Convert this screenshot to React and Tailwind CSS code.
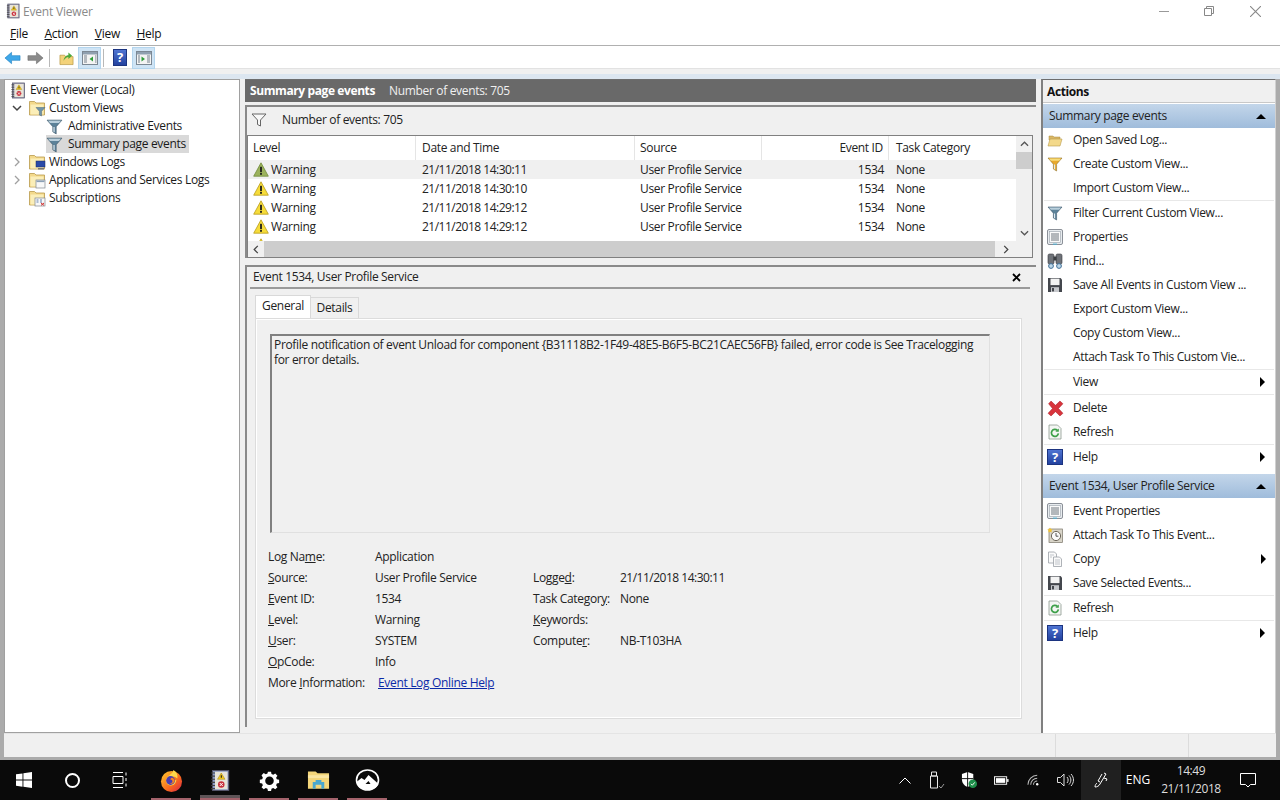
import React from "react";

const Help = ({ className = "w-4 h-4" }) => (
  <span className={`${className} shrink-0 flex items-center justify-center bg-gradient-to-b from-[#4f74d2] to-[#24429f] border border-[#1c3480] text-white text-[13px] font-bold leading-none`}>
    ?
  </span>
);

const AppIcon = ({ className = "w-4 h-4", cover = "#8f8fa8" }) => (
  <svg viewBox="0 0 16 18" className={className}>
    <rect x="2" y="1" width="13" height="16" fill={cover} stroke="#55556a" strokeWidth=".7" />
    <rect x="4" y="2" width="10" height="14" fill="#e8e4d8" />
    <path d="M1 3h3M1 5.5h3M1 8h3M1 10.5h3M1 13h3M1 15.5h3" stroke="#444" strokeWidth=".9" />
    <path d="M9 3l3 5H6z" fill="#f2c81e" stroke="#9c8010" strokeWidth=".4" />
    <rect x="8.6" y="4.800" width=".9" height="2" fill="#222" />
    <circle cx="9" cy="12.200" r="2.600" fill="#c8303c" />
    <path d="M7.800 11l2.400 2.400M10.200 11l-2.400 2.400" stroke="#fff" strokeWidth=".8" />
  </svg>
);

const Folder = ({ children }) => (
  <svg viewBox="0 0 18 18" className="w-[18px] h-[18px] shrink-0">
    <path d="M1.500 2.500h5l1.500 1.500h8.500v12h-15z" fill="#f3d98b" stroke="#b99a4c" strokeWidth=".8" />
    <rect x="2.500" y="5.500" width="13" height="10" fill="#fbeeb8" />
    {children}
  </svg>
);

const Funnel = ({ className = "w-4 h-4", top = "#b9cfdc", bottom = "#5c8299", dark = "#41596b" }) => (
  <svg viewBox="0 0 16 16" className={className}>
    <path d="M1 2h14L9.600 8.200V15L6.400 13V8.200z" fill={bottom} stroke={dark} strokeWidth=".6" />
    <path d="M2 2.600h12l-1.800 2.200H3.800z" fill={top} />
    <path d="M7 8.500h1.100v5L7 12.900z" fill="#dfeaf0" />
  </svg>
);

const Warning = ({ green }) => (
  <svg viewBox="0 0 16 15" className="w-4 h-[15px] shrink-0">
    <path d="M8 .8l7.300 13.400H.7z" fill={green ? "#9cb25c" : "#f6dc3a"} stroke={green ? "#6f8a38" : "#b79a1b"} strokeWidth=".8" strokeLinejoin="round" />
    <rect x="7.100" y="4.800" width="1.800" height="5.400" fill="#1c1c1c" />
    <rect x="7.100" y="11" width="1.800" height="1.800" fill="#1c1c1c" />
  </svg>
);

const Floppy = () => (
  <svg viewBox="0 0 16 16" className="w-4 h-4">
    <path d="M1 1h12.500L15 2.500V15H1z" fill="#44474d" />
    <rect x="3.500" y="1.600" width="9" height="6.500" fill="#f3f3f3" />
    <rect x="4" y="10.200" width="8" height="4.800" fill="#c6c8cc" />
    <rect x="5" y="11" width="2" height="3.400" fill="#44474d" />
  </svg>
);

const Refresh = () => (
  <svg viewBox="0 0 16 16" className="w-4 h-4">
    <path d="M2 1h8.500L14 4.500V15H2z" fill="#f4f6f4" stroke="#8e9a90" strokeWidth=".8" />
    <path d="M11.400 9.400a3.500 3.500 0 1 1-1-3" fill="none" stroke="#3ea04a" strokeWidth="1.700" />
    <path d="M11.800 4.400v3.400H8.400z" fill="#3ea04a" />
  </svg>
);

const Properties = () => (
  <svg viewBox="0 0 16 16" className="w-4 h-4">
    <rect x=".5" y=".5" width="15" height="15" rx="1.500" fill="#e8ecef" stroke="#7f858c" strokeWidth=".9" />
    <rect x="2.500" y="2.500" width="11" height="11" fill="#fafafa" stroke="#98a0a8" strokeWidth=".6" />
    <path d="M4 5h8M4 7h8M4 9h8M4 11h8" stroke="#5d666f" strokeWidth=".9" />
    <rect x="6" y="14.600" width="4" height="1" fill="#4fb3d8" />
  </svg>
);

const Binoculars = () => (
  <svg viewBox="0 0 16 16" className="w-4 h-4">
    <rect x="1" y="1" width="6" height="10" rx="1.500" fill="#6e7278" stroke="#35383c" strokeWidth=".6" />
    <rect x="9" y="1" width="6" height="10" rx="1.500" fill="#6e7278" stroke="#35383c" strokeWidth=".6" />
    <rect x="6.500" y="3.500" width="3" height="4" fill="#3b3e42" />
    <circle cx="4" cy="13" r="2.400" fill="#bcd6e8" stroke="#3f6f96" />
    <circle cx="12" cy="13" r="2.400" fill="#bcd6e8" stroke="#3f6f96" />
  </svg>
);

const Copy = () => (
  <svg viewBox="0 0 16 16" className="w-4 h-4">
    <path d="M1.500 1h6l2 2v9h-8z" fill="#fafafa" stroke="#9aa0a6" strokeWidth=".8" />
    <path d="M6.500 6h6l2 2v7.500h-8z" fill="#fafafa" stroke="#9aa0a6" strokeWidth=".8" />
    <path d="M3 4h4M3 6h2M8 9h5M8 11h5M8 13h5" stroke="#a6adb4" strokeWidth=".7" />
  </svg>
);

const TaskClock = () => (
  <svg viewBox="0 0 16 16" className="w-4 h-4">
    <rect x="2" y="2" width="13.500" height="13.500" fill="#d8d4c8" stroke="#7a7468" strokeWidth=".7" />
    <circle cx="9" cy="9" r="4.600" fill="#fafafa" stroke="#6d675c" />
    <path d="M9 6v3.200h2.400" fill="none" stroke="#444" strokeWidth=".9" />
    <path d="M3 .5l.9 1.700 1.800.4-1.300 1.200.3 1.800L3 4.700l-1.700.9.3-1.800L.3 2.600l1.800-.4z" fill="#f4c430" />
  </svg>
);

const OpenFolder = () => (
  <svg viewBox="0 0 16 16" className="w-4 h-4">
    <path d="M2 4h4l1 1h6v3H2z" fill="#d9b765" stroke="#a98a3e" strokeWidth=".5" />
    <path d="M1 14l2-7h12l-2 7z" fill="#f3d98b" stroke="#b99a4c" strokeWidth=".6" />
  </svg>
);

const PaneIcon = ({ children }) => (
  <div className="w-[23px] h-[22px] flex items-center justify-center bg-[#cfe4f5] border border-[#b3d5ee]">
    <svg viewBox="0 0 16 14" className="w-4 h-[14px]">
      <rect x=".5" y=".5" width="15" height="13" fill="#f4f4f4" stroke="#7c8894" />
      <rect x="1" y="1" width="14" height="2.500" fill="#8fa0b0" />
      {children}
    </svg>
  </div>
);

const actionsTop = [
  [[<OpenFolder />, "Open Saved Log..."], [<Funnel top="#f7dd7a" bottom="#e9a92c" dark="#8f7330" />, "Create Custom View..."], [null, "Import Custom View..."]],
  [[<Funnel />, "Filter Current Custom View..."], [<Properties />, "Properties"], [<Binoculars />, "Find..."], [<Floppy />, "Save All Events in Custom View ..."], [null, "Export Custom View..."], [null, "Copy Custom View..."], [null, "Attach Task To This Custom Vie..."]],
  [[null, "View", true]],
  [[<svg viewBox="0 0 16 16" className="w-[17px] h-[17px] shrink-0"><path d="M1.500 3.500L3.800 1 8 5 12.200 1 15 3.500 10.800 8 15 12.500 12.200 15 8 11 3.800 15 1 12.500 5.200 8z" fill="#d8343c" stroke="#a8222a" strokeWidth=".5" /></svg>, "Delete"], [<Refresh />, "Refresh"]],
  [[<Help />, "Help", true]],
];

const actionsEvent = [
  [[<Properties />, "Event Properties"], [<TaskClock />, "Attach Task To This Event..."], [<Copy />, "Copy", true], [<Floppy />, "Save Selected Events..."]],
  [[<Refresh />, "Refresh"]],
  [[<Help />, "Help", true]],
];

const rows = [
  ["21/11/2018 14:30:11", true],
  ["21/11/2018 14:30:10"],
  ["21/11/2018 14:29:12"],
  ["21/11/2018 14:29:12"],
];

const ActionSection = ({ title, groups, padded }) => (
  <div>
    <div className="h-6 pl-[6px] pr-2 flex items-center justify-between bg-gradient-to-b from-[#c3d6ea] to-[#9fbcdb]">
      <span>{title}</span>
      <span className="w-0 h-0 mr-[1px] border-x-[5px] border-x-transparent border-b-[5px] border-b-black" />
    </div>
    {groups.map((group, i) => (
      <div key={i} className={`${i > 0 ? "border-t border-[#e8e8e8] mx-[1px]" : ""} ${i === padded ? "pt-px" : ""}`}>
        {group.map(([icon, label, arrow]) => (
          <div key={label} className={`h-6 flex items-center pr-[9px] ${i > 0 ? "pl-[3px]" : "pl-[4px]"}`}>
            <span className="w-4 h-4 mr-[10px] flex items-center justify-center shrink-0">{icon}</span>
            <span className="flex-1 whitespace-nowrap">{label}</span>
            {arrow && <span className="w-0 h-0 border-y-[5px] border-y-transparent border-l-[5px] border-l-black" />}
          </div>
        ))}
      </div>
    ))}
  </div>
);

const TreeRow = ({ children, pad, chevron, selected, icon, gap = "ml-[5px]" }) => (
  <div className={`h-[18px] flex items-center ${pad}`}>
    {chevron === "open" && (
      <svg viewBox="0 0 10 10" className="w-[10px] h-[10px] mr-[6px]"><path d="M1 3l4 4 4-4" fill="none" stroke="#444" strokeWidth="1.500" /></svg>
    )}
    {chevron === "closed" && (
      <svg viewBox="0 0 10 10" className="w-[10px] h-[10px] mr-[6px]"><path d="M3 1l4 4-4 4" fill="none" stroke="#a0a0a0" strokeWidth="1.300" /></svg>
    )}
    <div className={`flex items-center h-[18px] ${selected ? "bg-[#d9d9d9] pr-[3px]" : ""}`}>
      {icon}
      <span className={`${gap} whitespace-nowrap`}>{children}</span>
    </div>
  </div>
);

const Field = ({ label }) => <span className="whitespace-nowrap">{label}</span>;

const Tray = ({ w, children, className = "" }) => (
  <div className={`h-10 flex items-center justify-center shrink-0 ${w} ${className}`}>{children}</div>
);

const Pin = ({ children, active }) => (
  <div className="relative w-10 h-10 flex items-center justify-center">
    {children}
    {active && <div className="absolute left-0 right-0 bottom-[2px] h-[3px] bg-[#5f5558]" />}
    <div className="absolute left-0 right-0 bottom-0 h-[2px] bg-[#a4636c]" />
  </div>
);

export default function App() {
  return (
    <div className="w-[1280px] h-[800px] overflow-hidden flex flex-col bg-white text-[12px] text-[#222] font-['Open_Sans',sans-serif] tracking-[-0.33px]">
      {/* title bar */}
      <div className="h-[22px] flex items-center pl-[6px] shrink-0">
        <AppIcon className="w-[14px] h-4" />
        <span className="ml-[3px] pt-px text-[#8a8a8a] tracking-[-0.2px]">Event Viewer</span>
        <div className="ml-auto flex items-center mr-[2px]">
          <div className="w-[44px] flex justify-center"><div className="w-[10px] h-px bg-[#999]" /></div>
          <div className="w-[46px] flex justify-center">
            <svg viewBox="0 0 10 10" className="w-[10px] h-[10px]"><path d="M.5 2.500h7v7h-7zM2.500 2.500v-2h7v7h-2" fill="none" stroke="#888" /></svg>
          </div>
          <div className="w-[46px] flex justify-center">
            <svg viewBox="0 0 10 10" className="w-[11px] h-[11px]"><path d="M0 0l10 10M10 0L0 10" stroke="#888" /></svg>
          </div>
        </div>
      </div>

      {/* menu */}
      <div className="h-6 flex items-center pl-[10px] gap-[16.5px] border-b border-[#b0b0b0] shrink-0 text-[#111] tracking-[-0.25px]">
        <span><u>F</u>ile</span>
        <span><u>A</u>ction</span>
        <span><u>V</u>iew</span>
        <span><u>H</u>elp</span>
      </div>

      {/* toolbar */}
      <div className="h-[23px] flex items-center pl-[4px] pt-[1px] border-b border-[#e2e2e2] shrink-0">
        <svg viewBox="0 0 18 14" className="w-[17px] h-[14px]"><path d="M8 1L1 7l7 6V9.500h9v-5H8z" fill="#3fa7e8" stroke="#1a7dc0" strokeWidth=".6" /></svg>
        <svg viewBox="0 0 18 14" className="w-[17px] h-[14px] ml-[6px]"><path d="M10 1l7 6-7 6V9.500H1v-5h9z" fill="#8a8a8a" stroke="#6a6a6a" strokeWidth=".6" /></svg>
        <div className="w-px h-[18px] bg-[#b8b8b8] ml-[5px]" />
        <div className="w-[22px] h-[22px] ml-[5px] mr-[1px] flex items-center justify-center">
          <svg viewBox="0 0 16 16" className="w-[15px] h-4"><path d="M1 5h5l1 1.500h8V15H1z" fill="#f3d27a" stroke="#b4923c" strokeWidth=".7" /><path d="M5 11c0-4 3-6 5-6V2l4 3.500L10 9V6.800C8 7 6 8.500 5 11z" fill="#4aa83c" /></svg>
        </div>
        <PaneIcon>
          <path d="M2 5h3M2 7h3M2 9h3M2 11h3M13 5h1.500M13 7h1.500M13 9h1.500M13 11h1.500" stroke="#74808c" />
          <path d="M11 5.500v5L7.500 8z" fill="#2f9e3a" />
        </PaneIcon>
        <div className="w-px h-[18px] bg-[#b8b8b8] ml-[2px]" />
        <div className="ml-[9px]"><Help className="w-[14px] h-[17px]" /></div>
        <div className="ml-[5px]">
          <PaneIcon>
            <path d="M2 5h2M2 7h2M2 9h2M2 11h2M11 5h3M11 7h3M11 9h3M11 11h3" stroke="#74808c" />
            <path d="M5.500 5.500v5L9 8z" fill="#2f9e3a" />
          </PaneIcon>
        </div>
      </div>

      {/* band above the panes */}
      <div className="h-[10px] shrink-0 bg-gradient-to-b from-[#f0f0f0] from-50% to-[#dce6f0] to-50%" />

      {/* panes and status bar */}
      <div className="flex-1 min-h-0 bg-[#ababab] px-1 pb-[3px]">
        <div className="h-full bg-[#f0f0f0] flex flex-col">
          <div className="h-[654px] flex gap-[5px] shrink-0">
            {/* tree */}
            <div className="w-[236px] bg-white border border-[#a0a0a0] pt-[1px] text-[#1a1a1a]">
              <TreeRow pad="pl-[5px]" gap="ml-[4px]" icon={<AppIcon className="w-[16px] h-[17px]" />}>Event Viewer (Local)</TreeRow>
              <TreeRow pad="pl-[7px]" gap="ml-[3px]" chevron="open" icon={<Folder><path d="M8 8.500h9l-3.400 3.800V17l-2.200-1v-3.700z" fill="#6f93a8" stroke="#4a6678" strokeWidth=".5" /></Folder>}>Custom Views</TreeRow>
              <TreeRow pad="pl-[41px]" icon={<Funnel className="w-[17px] h-[17px]" />}>Administrative Events</TreeRow>
              <TreeRow pad="pl-[41px]" selected icon={<Funnel className="w-[17px] h-[17px]" />}>Summary page events</TreeRow>
              <TreeRow pad="pl-[7px]" gap="ml-[3px]" chevron="closed" icon={<Folder><rect x="8" y="8" width="9" height="6" fill="#2a4aa8" stroke="#1c2c60" strokeWidth=".5" /><rect x="10" y="15" width="6" height="1.500" fill="#777" /></Folder>}>Windows Logs</TreeRow>
              <TreeRow pad="pl-[7px]" gap="ml-[3px]" chevron="closed" icon={<Folder><rect x="8" y="9" width="9" height="8" fill="#f8f8f8" stroke="#808890" strokeWidth=".7" /><rect x="8.500" y="9.500" width="8" height="1.600" fill="#8ba0b6" /></Folder>}>Applications and Services Logs</TreeRow>
              <TreeRow pad="pl-[7px]" gap="ml-[3px]" icon={<span className="ml-[16px]"><Folder><rect x="7" y="9" width="10" height="8" fill="#f8f8f8" stroke="#808890" strokeWidth=".7" /><path d="M8.500 11h2M12 11h2M8.500 13h2M12 13h2" stroke="#6080b0" /><path d="M13 14l3 2.400M16 14l-3 2.400" stroke="#d03030" /></Folder></span>}>Subscriptions</TreeRow>
            </div>

            {/* center */}
            <div className="w-[791px] flex flex-col border-t border-[#6d6d6d]">
              <div className="h-[22px] shrink-0 bg-[#696969] text-white flex items-center pl-[5px]">
                <span className="font-bold tracking-[-0.4px]">Summary page events</span>
                <span className="ml-[14px] text-[#f0f0f0]">Number of events: 705</span>
              </div>

              <div className="mt-[3px] h-[153px] shrink-0 border-t-2 border-l-2 border-[#8a8a8a] flex flex-col">
                <div className="h-[28px] flex items-center pl-[4px] pb-[2px] shrink-0">
                  <svg viewBox="0 0 16 14" className="w-4 h-[14px]"><path d="M1 1h14L9.500 7v6L6.500 11.500V7z" fill="#f8f8f8" stroke="#666" /></svg>
                  <span className="ml-[15px]">Number of events: 705</span>
                </div>
                <div className="w-[786px] flex-1 min-h-0 border border-[#808080] bg-white flex flex-col">
                  <div className="flex-1 flex min-h-0">
                    <div className="flex-1 min-w-0 overflow-hidden">
                      <div className="h-6 flex items-center">
                        <div className="w-[168px] h-full flex items-center pl-[5px] border-r border-[#e5e5e5]">Level</div>
                        <div className="w-[219px] h-full flex items-center pl-[6px] border-r border-[#e5e5e5]">Date and Time</div>
                        <div className="w-[127px] h-full flex items-center pl-[5px] border-r border-[#e5e5e5]">Source</div>
                        <div className="w-[127px] h-full flex items-center justify-end pr-[5px] border-r border-[#e5e5e5]">Event ID</div>
                        <div className="pl-[7px]">Task Category</div>
                      </div>
                      {rows.map(([time, active], i) => (
                        <div key={i} className={`h-[19px] flex items-center ${active ? "bg-[#f0f0f0]" : ""}`}>
                          <div className="w-[168px] flex items-center pl-[5px]"><Warning green={active} /><span className="ml-[2px]">Warning</span></div>
                          <div className="w-[219px] pl-[6px] tracking-[-0.5px]">{time}</div>
                          <div className="w-[127px] pl-[5px]">User Profile Service</div>
                          <div className="w-[127px] text-right pr-[5px]">1534</div>
                          <div className="pl-[7px]">None</div>
                        </div>
                      ))}
                      {/* next row only just peeks out above the scrollbar */}
                      <div className="pl-[5px] pt-[2px]"><Warning /></div>
                    </div>
                    <div className="w-[16px] shrink-0 bg-[#f0f0f0] flex flex-col items-center">
                      <svg viewBox="0 0 10 6" className="w-[9px] h-[6px] mt-[5px]"><path d="M1 5l4-4 4 4" fill="none" stroke="#555" strokeWidth="1.400" /></svg>
                      <div className="w-full h-[17px] mt-[5px] bg-[#cdcdcd]" />
                      <svg viewBox="0 0 10 6" className="w-[9px] h-[6px] mt-auto mb-[5px]"><path d="M1 1l4 4 4-4" fill="none" stroke="#555" strokeWidth="1.400" /></svg>
                    </div>
                  </div>
                  <div className="h-4 shrink-0 bg-[#f0f0f0] flex items-center">
                    <svg viewBox="0 0 6 10" className="w-[6px] h-[9px] mx-[5px]"><path d="M5 1L1 5l4 4" fill="none" stroke="#444" strokeWidth="1.400" /></svg>
                    <div className="w-[731px] h-full bg-[#cdcdcd]" />
                    <svg viewBox="0 0 6 10" className="w-[6px] h-[9px] ml-[8px]"><path d="M1 1l4 4-4 4" fill="none" stroke="#444" strokeWidth="1.400" /></svg>
                  </div>
                </div>
              </div>

              <div className="mt-[7px] flex-1 min-h-0 border-t-2 border-l-2 border-[#8a8a8a] flex flex-col mb-[6px]">
                <div className="h-[20px] ml-[3px] mr-[6px] shrink-0 border-b-2 border-[#9a9a9a] flex items-center justify-between pl-[3px] pr-[9px] box-content">
                  <span>Event 1534, User Profile Service</span>
                  <svg viewBox="0 0 9 9" className="w-[9px] h-[9px]"><path d="M1 1l7 7M8 1L1 8" stroke="#000" strokeWidth="1.800" /></svg>
                </div>
                <div className="flex items-end h-[29px] shrink-0 pl-[8px]">
                  <div className="w-[56px] h-[23px] pb-[2px] bg-white border border-b-0 border-[#d9d9d9] flex items-center justify-center">General</div>
                  <div className="w-[48px] h-[21px] bg-[#f0f0f0] border border-l-0 border-b-0 border-[#d9d9d9] flex items-center justify-center">Details</div>
                </div>
                <div className="ml-[8px] w-[767px] flex-1 min-h-0 mb-[8px] border border-[#dcdcdc] outline outline-1 outline-white -outline-offset-2 bg-[#f0f0f0] pt-[15px] pl-[14px]">
                  <div className="w-[720px] h-[199px] border-t-2 border-l-2 border-t-[#808080] border-l-[#808080] border-r border-b border-r-[#e0e0e0] border-b-[#e0e0e0] pl-[2px] pt-[1px] pr-[4px] leading-[15px]">
                    Profile notification of event Unload for component {"{B31118B2-1F49-48E5-B6F5-BC21CAEC56FB}"} failed, error code is See Tracelogging for error details.
                  </div>
                  <div className="mt-[13px] -ml-[2px] grid grid-cols-[107px_158px_87px_1fr] auto-rows-[21px] items-center">
                    <Field label={<>Log Na<u>m</u>e:</>} /><span>Application</span><span /><span />
                    <Field label={<><u>S</u>ource:</>} /><span>User Profile Service</span><Field label={<>Logge<u>d</u>:</>} /><span className="tracking-[-0.5px]">21/11/2018 14:30:11</span>
                    <Field label={<><u>E</u>vent ID:</>} /><span>1534</span><Field label={<>Task Categor<u>y</u>:</>} /><span>None</span>
                    <Field label={<><u>L</u>evel:</>} /><span>Warning</span><Field label={<><u>K</u>eywords:</>} /><span />
                    <Field label={<><u>U</u>ser:</>} /><span>SYSTEM</span><Field label={<>Compute<u>r</u>:</>} /><span>NB-T103HA</span>
                    <Field label={<><u>O</u>pCode:</>} /><span>Info</span><span /><span />
                    <Field label={<>More <u>I</u>nformation:</>} /><span className="pl-[3px] text-[#0b2aa8] underline">Event Log Online Help</span><span /><span />
                  </div>
                </div>
              </div>
            </div>

            {/* actions */}
            <div className="w-[235px] bg-white border-t border-[#6d6d6d] border-l-2 border-l-[#808080] border-r border-r-[#d0d0d0]">
              <div className="h-[23px] pt-px bg-[#f0f0f0] border-b border-[#c8c8c8] flex items-center pl-[4px] font-bold tracking-[-0.4px] text-[#111]">Actions</div>
              <div className="mt-[1px]">
                <ActionSection title="Summary page events" groups={actionsTop} padded={3} />
              </div>
              <div className="mt-[5px]">
                <ActionSection title="Event 1534, User Profile Service" groups={actionsEvent} padded={0} />
              </div>
            </div>
          </div>

          {/* status bar */}
          <div className="flex-1 flex justify-end border-t border-[#e4e4e4]">
            <div className="w-[133px] border-l border-[#dcdcdc]" />
            <div className="w-[88px] border-l border-[#dcdcdc]" />
          </div>
        </div>
      </div>

      {/* taskbar */}
      <div className="h-10 shrink-0 bg-[#0a0a0a] flex items-center text-white">
        <Tray w="w-12">
          <svg viewBox="0 0 16 16" className="w-4 h-4"><path d="M0 2.300l6.500-.9v6.200H0zM7.400 1.300L16 0v7.600H7.400zM0 8.500h6.500v6.200L0 13.800zM7.400 8.500H16V16l-8.600-1.300z" fill="#fff" /></svg>
        </Tray>
        <Tray w="w-12"><div className="w-[15px] h-[15px] rounded-full border-2 border-white" /></Tray>
        <Tray w="w-12">
          <svg viewBox="0 0 16 16" className="w-4 h-4"><path d="M1 .5h10M1 15.500h10M1 4.500h10v7H1zM14 .5v3M14 6v3M14 11.500v3" fill="none" stroke="#fff" strokeWidth="1" /></svg>
        </Tray>
        <div className="ml-[7px] flex gap-[9px]">
          <Pin>
            <svg viewBox="0 0 24 24" className="w-[23px] h-[23px]">
              <defs><linearGradient id="fx" x1="0" y1="0" x2="1" y2="1"><stop offset="0" stopColor="#ffcb2e" /><stop offset=".6" stopColor="#f9681e" /><stop offset="1" stopColor="#d6204a" /></linearGradient></defs>
              <circle cx="12" cy="13" r="11" fill="url(#fx)" />
              <path d="M14 1c3 2 5 5 4 9-2-2-5-3-7-1-2 1-1 4 2 4 2 0 4-2 4-2 0 4-3 7-7 6C6 16 5 11 8 8c2-2 5-3 6-7z" fill="#ffd84a" />
              <circle cx="11" cy="12" r="4.600" fill="#4a3bb0" />
              <path d="M12 9c2 0 4 2 3 4s-3 3-5 2c2 0 3-1 3-2s-1-2-2-2 1-2 1-2z" fill="#f9861e" />
            </svg>
          </Pin>
          <Pin active><AppIcon className="w-[20px] h-[23px]" cover="#8d9cc4" /></Pin>
          <Pin>
            <svg viewBox="0 0 24 24" className="w-[21px] h-[21px]">
              <path fill="#fff" fillRule="evenodd" d="M10 1h4l.6 3 2.200.9 2.600-1.700 2.800 2.800-1.700 2.600.9 2.200 3 .6v4l-3 .6-.9 2.200 1.700 2.600-2.800 2.800-2.600-1.700-2.200.9-.6 3h-4l-.6-3-2.200-.9-2.600 1.700-2.800-2.800 1.700-2.600-.9-2.200-3-.6v-4l3-.6.9-2.200L1.800 5.400 4.600 2.600l2.600 1.700L9.400 3.400zM12 7a5.500 5.500 0 1 0 0 11 5.500 5.500 0 0 0 0-11z" transform="translate(1.300 1.100) scale(.89)" />
            </svg>
          </Pin>
          <Pin>
            <svg viewBox="0 0 24 20" className="w-[23px] h-[20px]">
              <path d="M1 1h8l2 2h12v16H1z" fill="#f4d67a" />
              <rect x="1" y="5" width="22" height="3" fill="#fbe6a2" />
              <path d="M6 19v-7h3v-2h6v2h3v7h-3v-4H9v4z" fill="#4aa8cf" />
            </svg>
          </Pin>
          <Pin>
            <svg viewBox="0 0 24 22" className="w-[25px] h-[22px]">
              <ellipse cx="12" cy="11" rx="11" ry="10" fill="none" stroke="#fff" strokeWidth="1.600" />
              <path d="M1 13l5-4 3 2 4-5 10 9c-2 4-6 6-11 6-6 0-10-3-11-8z" fill="#fff" />
              <path d="M10 15l3-3 2 3z" fill="#0a0a0a" />
            </svg>
          </Pin>
        </div>

        <div className="ml-auto flex items-center mr-[12px]">
          <Tray w="w-8"><svg viewBox="0 0 12 7" className="w-3 h-[7px]"><path d="M.5 6.500L6 1l5.500 5.500" fill="none" stroke="#fff" /></svg></Tray>
          <Tray w="w-8">
            <svg viewBox="0 0 16 18" className="w-4 h-[18px]"><path d="M2.500 1h5v4h-5zM1.500 5h7v12h-7z" fill="none" stroke="#e8e8e8" /><path d="M10 15l2 2 3-4" fill="none" stroke="#999" /></svg>
          </Tray>
          <Tray w="w-8">
            <svg viewBox="0 0 18 18" className="w-[17px] h-[17px]">
              <path d="M1 2l6-2 6 2v6c0 4-3 7-6 8-3-1-6-4-6-8z" fill="#fff" />
              <path d="M7 0v16M1 7h12" stroke="#0a0a0a" strokeWidth="1" />
              <circle cx="12.500" cy="12.500" r="4.500" fill="#1e8e4a" />
              <path d="M10.500 12.500l1.500 1.500 2.500-3" fill="none" stroke="#fff" />
            </svg>
          </Tray>
          <Tray w="w-8">
            <svg viewBox="0 0 16 9" className="w-[15px] h-[9px]"><rect x=".5" y=".5" width="13" height="8" fill="#0a0a0a" stroke="#fff" /><rect x="2" y="2" width="10" height="5" fill="#fff" /><rect x="14" y="3" width="1.500" height="3" fill="#fff" /></svg>
          </Tray>
          <Tray w="w-8">
            <svg viewBox="0 0 14 12" className="w-[13px] h-[12px]"><path d="M1 11A10 10 0 0 1 11 1M4 11a7 7 0 0 1 7-7M7 11a4 4 0 0 1 4-4" fill="none" stroke="#bbb" strokeWidth="1.100" /><circle cx="11" cy="10.500" r="1.300" fill="#fff" /></svg>
          </Tray>
          <Tray w="w-8">
            <svg viewBox="0 0 17 14" className="w-[17px] h-[14px]"><path d="M.5 4.500h3L7 1v12L3.500 9.500h-3z" fill="none" stroke="#ddd" /><path d="M10 4c1.500 1.800 1.500 4.200 0 6M12 2.500c2.500 2.700 2.500 6.300 0 9M14 1c3.300 3.500 3.300 8.500 0 12" fill="none" stroke="#ddd" /></svg>
          </Tray>
          <Tray w="w-10" className="bg-[#202020]">
            <svg viewBox="0 0 16 16" className="w-4 h-4"><path d="M11 1l2 1-6 10c-1 2-3 3-5 3 0-2 1-3 2-4M9 2c-1 2-3 5-4 7l2 1M11 6l3 1-1 2" fill="none" stroke="#fff" strokeWidth="1" /></svg>
          </Tray>
          <Tray w="w-[34px]"><span className="text-[12px] tracking-normal">ENG</span></Tray>
          <Tray w="w-[72px]">
            <div className="text-center leading-[18px] text-[12px] text-[#ddd] tracking-[-0.4px]">
              <div>14:49</div>
              <div>21/11/2018</div>
            </div>
          </Tray>
          <Tray w="w-[41px]">
            <svg viewBox="0 0 16 15" className="w-[16px] h-[15px]"><path d="M.5.5h15v11h-5L8 14l-2.500-2.500h-5z" fill="none" stroke="#fff" /></svg>
          </Tray>
        </div>
      </div>
    </div>
  );
}
